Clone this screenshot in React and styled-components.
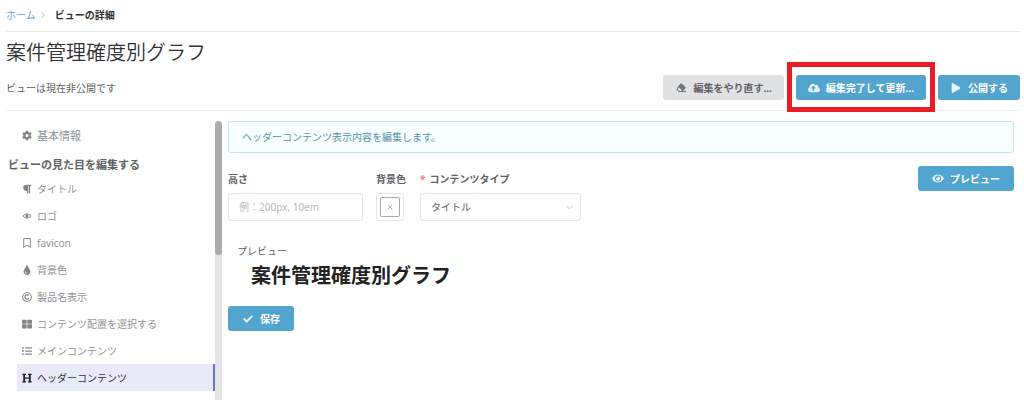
import React from 'react';
import styled, { createGlobalStyle } from 'styled-components';
import {
  FaCheck,
  FaCloudUploadAlt,
  FaCog,
  FaEye,
  FaHeading,
  FaListUl,
  FaParagraph,
  FaPlay,
  FaRegBookmark,
  FaRegCopyright,
  FaThLarge,
  FaTint,
} from 'react-icons/fa';
import { ChevronDown, ChevronRight, X } from 'lucide-react';

const GlobalStyle = createGlobalStyle`
  * {
    box-sizing: border-box;
  }

  body {
    margin: 0;
    background: #fff;
    color: #606266;
    font-family: "Noto Sans", "Noto Sans CJK JP", sans-serif;
    font-size: 10px;
    line-height: 16px;
  }

  button, input, select {
    font: inherit;
  }
`;

const Page = styled.div`
  padding: 0 4px 0 6px;
`;

const Breadcrumb = styled.nav`
  display: flex;
  align-items: center;
  height: 32px;
  padding-bottom: 2px;
  border-bottom: 1px solid #e8e8e8;

  a {
    color: #6a9fd4;
    text-decoration: none;
  }

  svg {
    margin: 0 7px 0 2px;
    color: #a5a8ae;
  }
`;

const Current = styled.span`
  color: #303133;
  font-weight: 600;
`;

const Title = styled.h1`
  margin: 7px 0 0;
  color: #303133;
  font-size: 20px;
  font-weight: 350;
  line-height: 28px;
`;

const StatusRow = styled.div`
  display: flex;
  align-items: center;
  justify-content: space-between;
  padding: 8px 0 10px;
  border-bottom: 1px solid #eee;
`;

const Actions = styled.div`
  display: flex;
  gap: 12px;
`;

const Button = styled.button`
  display: inline-flex;
  align-items: center;
  justify-content: center;
  gap: 6px;
  height: 25px;
  padding: 0 ${props => props.$wide ? '14px' : '12px'};
  border: 0;
  border-radius: 3px;
  background: ${props => props.$muted ? '#e0e1e2' : '#52a5cf'};
  color: ${props => props.$muted ? '#5f6062' : '#fff'};
  font-weight: 700;
  white-space: nowrap;

  svg {
    flex: none;
    width: 12px;
    opacity: 0.85;
  }
`;

const Highlight = styled.div`
  position: relative;

  &::after {
    content: '';
    position: absolute;
    inset: -13px -9px -12px;
    border: 5px solid #ec1c24;
    pointer-events: none;
  }
`;

const Body = styled.div`
  display: flex;
  gap: 6px;
  padding-top: 10px;
`;

const Sidebar = styled.aside`
  display: flex;
  flex: none;
  width: 216px;
`;

const Menu = styled.nav`
  flex: 1;
  padding: 1px 0 9px 2px;
`;

const MenuHeading = styled.h2`
  margin: 0;
  padding-top: 5px;
  color: #606266;
  font-size: 11px;
  font-weight: 600;
  line-height: 21px;
`;

const MenuItem = styled.a`
  display: flex;
  align-items: center;
  gap: 5px;
  height: 27px;
  margin-left: 9px;
  padding-left: 5px;
  border-right: 2px solid ${props => props.$active ? '#6675dc' : 'transparent'};
  background: ${props => props.$active ? '#e9eaf9' : 'transparent'};
  color: ${props => props.$active ? '#303133' : '#909399'};
  font-size: ${props => props.$large ? '11px' : '10px'};
  text-decoration: none;

  svg {
    flex: none;
    width: 10px;
    color: ${props => props.$active ? '#222' : '#858585'};
  }
`;

const ScrollTrack = styled.div`
  width: 7px;
  border-radius: 4px 4px 0 0;
  background: #e4e4e4;
`;

const ScrollThumb = styled.div`
  height: 134px;
  border-radius: 4px;
  background: #ababab;
`;

const Content = styled.main`
  flex: 1;
  padding-right: 6px;
`;

const Notice = styled.p`
  margin: 0;
  padding: 7px 13px;
  border: 1px solid #c5e6ea;
  border-radius: 3px;
  background: #f8ffff;
  color: #5795a5;
`;

const Toolbar = styled.div`
  display: flex;
  align-items: flex-start;
  justify-content: space-between;
  padding-top: 13px;
`;

const Fields = styled.div`
  display: flex;
  gap: 13px;
  padding-top: 5px;
`;

const Field = styled.div`
  display: flex;
  flex-direction: column;
  gap: 6px;
`;

const Label = styled.label`
  font-weight: 600;
  white-space: nowrap;
`;

const Required = styled.span`
  margin-right: 4px;
  color: #f56c6c;
`;

const TextInput = styled.input`
  width: 135px;
  height: 28px;
  padding: 0 10px;
  border: 1px solid #e2e4ea;
  border-radius: 3px;
  color: #606266;

  &::placeholder {
    color: #b6b9c2;
  }
`;

const Swatch = styled.button`
  width: 28px;
  height: 28px;
  padding: 3px;
  border: 1px solid #e6e8ec;
  border-radius: 3px;
  background: #fff;

  span {
    display: flex;
    align-items: center;
    justify-content: center;
    height: 100%;
    border: 1px solid #a8a8a8;
    border-radius: 2px;
    color: #909399;
  }
`;

const SelectBox = styled.div`
  display: grid;
  align-items: center;
  width: 161px;

  > * {
    grid-area: 1 / 1;
  }

  svg {
    justify-self: end;
    margin-right: 6px;
    color: #b6b9c2;
    pointer-events: none;
  }
`;

const Select = styled.select`
  appearance: none;
  width: 100%;
  height: 28px;
  padding: 0 10px;
  border: 1px solid #e2e4ea;
  border-radius: 3px;
  background: #fff;
  color: #606266;
`;

const TypeField = styled(Field)`
  margin-left: 1px;
`;

const Preview = styled.section`
  padding: 22px 9px 15px;
`;

const PreviewTitle = styled.h2`
  margin: 2px 0 0 14px;
  color: #222;
  font-size: 20px;
  font-weight: 700;
  line-height: 30px;
`;

const EraserIcon = () => (
  <svg width="12" height="12" viewBox="0 0 24 24" fill="none" stroke="currentColor" strokeWidth="2.200" strokeLinejoin="round">
    <path d="M12 4L20 11.500L13 19H8L4 14.500Z" />
    <path d="M12 4L20 11.500L15.500 16.500L8 9Z" fill="currentColor" />
    <path d="M13 19H22" />
  </svg>
);

const ViewIcon = () => (
  <svg width="10" height="10" viewBox="0 0 20 20" fill="none" stroke="currentColor" strokeWidth="2">
    <path d="M2 10C5 4.500 15 4.500 18 10C15 15.500 5 15.500 2 10Z" />
    <circle cx="10" cy="10" r="2.500" fill="currentColor" />
  </svg>
);

const items = [
  { label: 'タイトル', icon: <FaParagraph /> },
  { label: 'ロゴ', icon: <ViewIcon /> },
  { label: 'favicon', icon: <FaRegBookmark /> },
  { label: '背景色', icon: <FaTint /> },
  { label: '製品名表示', icon: <FaRegCopyright /> },
  { label: 'コンテンツ配置を選択する', icon: <FaThLarge /> },
  { label: 'メインコンテンツ', icon: <FaListUl /> },
  { label: 'ヘッダーコンテンツ', icon: <FaHeading />, active: true },
];

const App = () => (
  <Page>
    <GlobalStyle />
    <Breadcrumb>
      <a href="#home">ホーム</a>
      <ChevronRight size={10} />
      <Current>ビューの詳細</Current>
    </Breadcrumb>
    <Title>案件管理確度別グラフ</Title>
    <StatusRow>
      <span>ビューは現在非公開です</span>
      <Actions>
        <Button $muted><EraserIcon />編集をやり直す...</Button>
        <Highlight>
          <Button><FaCloudUploadAlt size={12} />編集完了して更新...</Button>
        </Highlight>
        <Button><FaPlay size={10} />公開する</Button>
      </Actions>
    </StatusRow>
    <Body>
      <Sidebar>
        <Menu>
          <MenuItem href="#basic" $large><FaCog />基本情報</MenuItem>
          <MenuHeading>ビューの見た目を編集する</MenuHeading>
          {items.map(item => (
            <MenuItem key={item.label} href="#edit" $active={item.active}>
              {item.icon}
              {item.label}
            </MenuItem>
          ))}
        </Menu>
        <ScrollTrack>
          <ScrollThumb />
        </ScrollTrack>
      </Sidebar>
      <Content>
        <Notice>ヘッダーコンテンツ表示内容を編集します。</Notice>
        <Toolbar>
          <Fields>
            <Field>
              <Label htmlFor="height">高さ</Label>
              <TextInput id="height" placeholder="例：200px, 10em" />
            </Field>
            <Field>
              <Label htmlFor="background">背景色</Label>
              <Swatch id="background">
                <span><X size={8} /></span>
              </Swatch>
            </Field>
            <TypeField>
              <Label htmlFor="type"><Required>*</Required>コンテンツタイプ</Label>
              <SelectBox>
                <Select id="type">
                  <option>タイトル</option>
                </Select>
                <ChevronDown size={11} />
              </SelectBox>
            </TypeField>
          </Fields>
          <Button $wide><FaEye size={11} />プレビュー</Button>
        </Toolbar>
        <Preview>
          <div>プレビュー</div>
          <PreviewTitle>案件管理確度別グラフ</PreviewTitle>
        </Preview>
        <Button $wide><FaCheck size={10} />保存</Button>
      </Content>
    </Body>
  </Page>
);

export default App;
